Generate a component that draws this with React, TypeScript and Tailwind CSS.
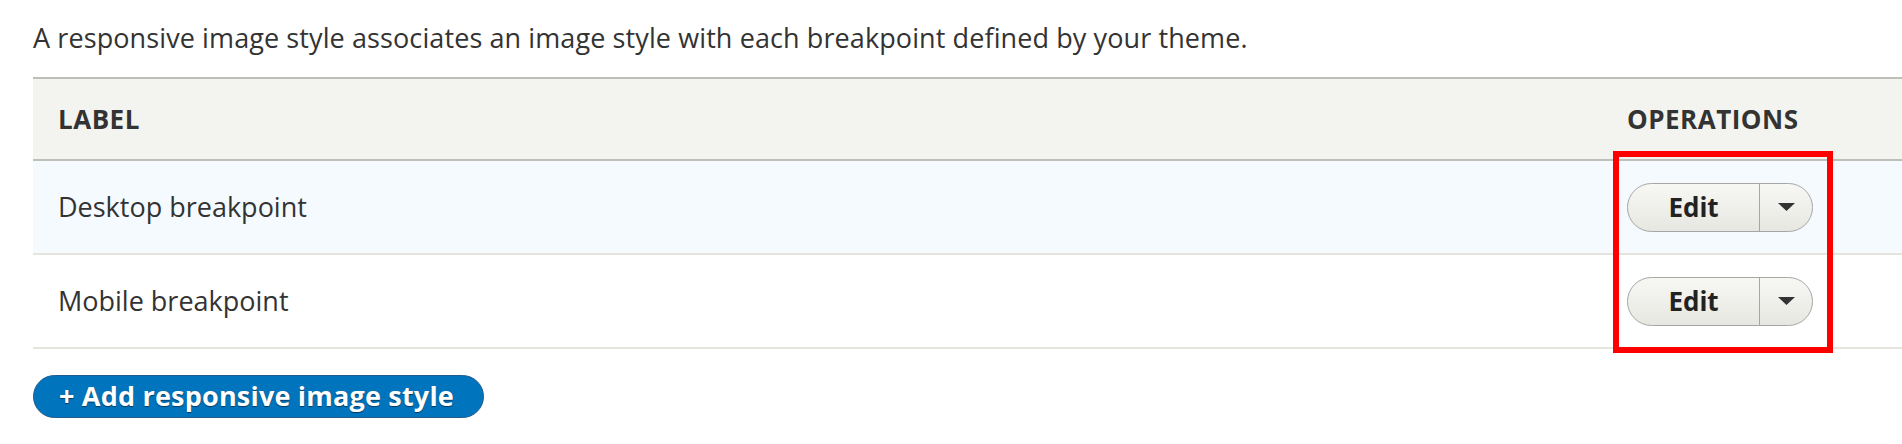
const rows = ['Desktop breakpoint', 'Mobile breakpoint'];

const Caret = () => (
  <svg width="17" height="8" viewBox="0 0 17 8" className="block">
    <path d="M0 0 L17 0 L8.5 8 Z" fill="#333" />
  </svg>
);

const DropButton = () => (
  <div className="flex h-[49px] w-[186px] overflow-hidden rounded-full border border-[#a6a6a6] bg-gradient-to-b from-[#f7f7f4] to-[#e7e7e2]">
    <div className="flex flex-1 items-center justify-center text-[26px] font-bold text-[#222]">
      Edit
    </div>
    <div className="flex w-[53px] items-center justify-center border-l border-[#a6a6a6]">
      <Caret />
    </div>
  </div>
);

export default function App() {
  return (
    <div
      className="relative h-[444px] w-full bg-white pl-[33px] text-[#333]"
      style={{ fontFamily: '"Open Sans", "Liberation Sans", sans-serif' }}
    >
      <p className="pt-[18px] text-[27px] leading-[39px] tracking-[0.1px]">
        A responsive image style associates an image style with each breakpoint defined by your theme.
      </p>

      <div className="mt-[20px]">
        <div className="grid h-[84px] grid-cols-[1fr_300px] border-y-2 border-[#bfbfba] bg-[#f3f4ef] text-[26px] font-bold tracking-[0.5px] uppercase">
          <div className="flex items-center pl-[25px]">Label</div>
          <div className="flex items-center pl-[25px]">Operations</div>
        </div>
        {rows.map((label, i) => (
          <div
            key={label}
            className={
              i === 0
                ? 'grid h-[94px] grid-cols-[1fr_300px] border-b-2 border-[#e6e4df] bg-[#f5faff]'
                : 'grid h-[94px] grid-cols-[1fr_300px] border-b-2 border-[#e6e4df] bg-white'
            }
          >
            <div className="flex items-center pl-[25px] text-[27px]">{label}</div>
            <div className="flex items-center pl-[25px]">
              <DropButton />
            </div>
          </div>
        ))}
      </div>

      <button className="mt-[26px] flex h-[43px] items-center rounded-full border border-[#1e5c90] bg-[#0074bd] pr-[29px] pl-[25px] text-[27px] font-bold tracking-[0.2px] text-white [text-shadow:0_1px_1px_rgba(0,0,0,0.5)]">
        + Add responsive image style
      </button>

      {/* highlight annotation */}
      <div className="pointer-events-none absolute top-[151px] left-[1613px] h-[202px] w-[220px] border-[6px] border-[#ff0000]" />
    </div>
  );
}
